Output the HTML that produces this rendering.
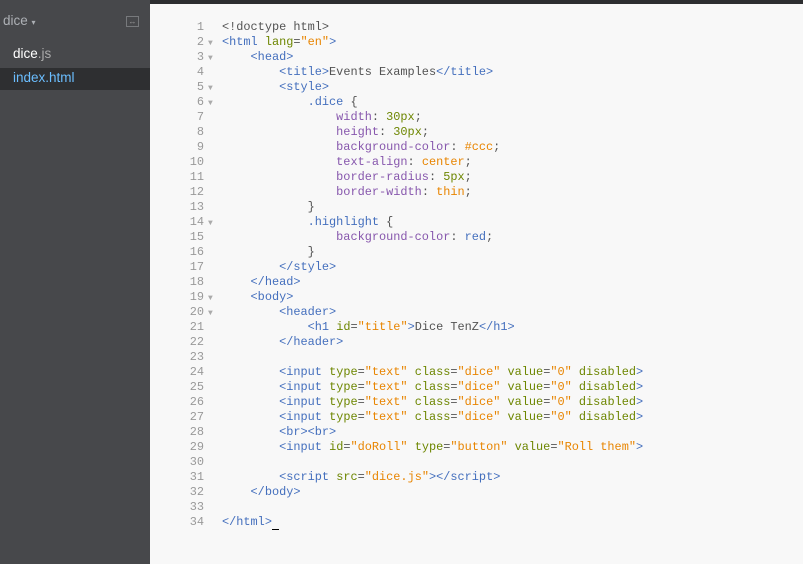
<!DOCTYPE html>
<html><head><style>
body{margin:0;width:803px;height:564px;overflow:hidden;background:#f8f8f8;position:relative;font-family:"Liberation Sans",sans-serif}
#side{position:absolute;left:0;top:0;width:150px;height:564px;background:#47484b}
#top{position:absolute;left:150px;top:0;width:653px;height:4px;background:#2d2e30}
.t{position:absolute;font-size:13.5px}
#code{position:absolute;left:0;top:20px;width:803px;font-family:"Liberation Mono",monospace;font-size:11.9px;line-height:15px;color:#535353}
.l{height:15px;position:relative}
.n{position:absolute;left:150px;width:54px;text-align:right;color:#999}
.f{position:absolute;left:208px;color:#aaa;font-size:8px;top:1px}
.c{position:absolute;left:222px;white-space:pre}
.g{color:#446fbd}.a{color:#6d8600}.s{color:#e88501}.p{color:#8757ad}
</style></head><body>
<div id="side">
<div class="t" style="left:3px;top:13px;color:#adb0b5">dice <span style="font-size:8px">▾</span></div>
<div style="position:absolute;left:126px;top:16px;width:11px;height:9px;border:1px solid #77797c;color:#999;font-size:8px;line-height:9px;text-align:center">↔</div>
<div class="t" style="left:13px;top:46px;color:#fff">dice<span style="color:#aaa">.js</span></div>
<div style="position:absolute;left:0;top:68px;width:150px;height:22px;background:#2e2f31"></div>
<div class="t" style="left:13px;top:70px;color:#6bbeff">index.html</div>
</div>
<div id="top"></div>
<div id="code">
<div class="l"><span class="n">1</span><span class="c">&lt;!doctype html&gt;</span></div>
<div class="l"><span class="n">2</span><span class="f">▼</span><span class="c"><span class="g">&lt;html</span> <span class="a">lang</span>=<span class="s">"en"</span><span class="g">&gt;</span></span></div>
<div class="l"><span class="n">3</span><span class="f">▼</span><span class="c">    <span class="g">&lt;head&gt;</span></span></div>
<div class="l"><span class="n">4</span><span class="c">        <span class="g">&lt;title&gt;</span>Events Examples<span class="g">&lt;/title&gt;</span></span></div>
<div class="l"><span class="n">5</span><span class="f">▼</span><span class="c">        <span class="g">&lt;style&gt;</span></span></div>
<div class="l"><span class="n">6</span><span class="f">▼</span><span class="c">            <span class="g">.dice</span> {</span></div>
<div class="l"><span class="n">7</span><span class="c">                <span class="p">width</span>: <span class="a">30px</span>;</span></div>
<div class="l"><span class="n">8</span><span class="c">                <span class="p">height</span>: <span class="a">30px</span>;</span></div>
<div class="l"><span class="n">9</span><span class="c">                <span class="p">background-color</span>: <span class="s">#ccc</span>;</span></div>
<div class="l"><span class="n">10</span><span class="c">                <span class="p">text-align</span>: <span class="s">center</span>;</span></div>
<div class="l"><span class="n">11</span><span class="c">                <span class="p">border-radius</span>: <span class="a">5px</span>;</span></div>
<div class="l"><span class="n">12</span><span class="c">                <span class="p">border-width</span>: <span class="s">thin</span>;</span></div>
<div class="l"><span class="n">13</span><span class="c">            }</span></div>
<div class="l"><span class="n">14</span><span class="f">▼</span><span class="c">            <span class="g">.highlight</span> {</span></div>
<div class="l"><span class="n">15</span><span class="c">                <span class="p">background-color</span>: <span class="g">red</span>;</span></div>
<div class="l"><span class="n">16</span><span class="c">            }</span></div>
<div class="l"><span class="n">17</span><span class="c">        <span class="g">&lt;/style&gt;</span></span></div>
<div class="l"><span class="n">18</span><span class="c">    <span class="g">&lt;/head&gt;</span></span></div>
<div class="l"><span class="n">19</span><span class="f">▼</span><span class="c">    <span class="g">&lt;body&gt;</span></span></div>
<div class="l"><span class="n">20</span><span class="f">▼</span><span class="c">        <span class="g">&lt;header&gt;</span></span></div>
<div class="l"><span class="n">21</span><span class="c">            <span class="g">&lt;h1</span> <span class="a">id</span>=<span class="s">"title"</span><span class="g">&gt;</span>Dice TenZ<span class="g">&lt;/h1&gt;</span></span></div>
<div class="l"><span class="n">22</span><span class="c">        <span class="g">&lt;/header&gt;</span></span></div>
<div class="l"><span class="n">23</span></div>
<div class="l"><span class="n">24</span><span class="c">        <span class="g">&lt;input</span> <span class="a">type</span>=<span class="s">"text"</span> <span class="a">class</span>=<span class="s">"dice"</span> <span class="a">value</span>=<span class="s">"0"</span> <span class="a">disabled</span><span class="g">&gt;</span></span></div>
<div class="l"><span class="n">25</span><span class="c">        <span class="g">&lt;input</span> <span class="a">type</span>=<span class="s">"text"</span> <span class="a">class</span>=<span class="s">"dice"</span> <span class="a">value</span>=<span class="s">"0"</span> <span class="a">disabled</span><span class="g">&gt;</span></span></div>
<div class="l"><span class="n">26</span><span class="c">        <span class="g">&lt;input</span> <span class="a">type</span>=<span class="s">"text"</span> <span class="a">class</span>=<span class="s">"dice"</span> <span class="a">value</span>=<span class="s">"0"</span> <span class="a">disabled</span><span class="g">&gt;</span></span></div>
<div class="l"><span class="n">27</span><span class="c">        <span class="g">&lt;input</span> <span class="a">type</span>=<span class="s">"text"</span> <span class="a">class</span>=<span class="s">"dice"</span> <span class="a">value</span>=<span class="s">"0"</span> <span class="a">disabled</span><span class="g">&gt;</span></span></div>
<div class="l"><span class="n">28</span><span class="c">        <span class="g">&lt;br&gt;&lt;br&gt;</span></span></div>
<div class="l"><span class="n">29</span><span class="c">        <span class="g">&lt;input</span> <span class="a">id</span>=<span class="s">"doRoll"</span> <span class="a">type</span>=<span class="s">"button"</span> <span class="a">value</span>=<span class="s">"Roll them"</span><span class="g">&gt;</span></span></div>
<div class="l"><span class="n">30</span></div>
<div class="l"><span class="n">31</span><span class="c">        <span class="g">&lt;script</span> <span class="a">src</span>=<span class="s">"dice.js"</span><span class="g">&gt;&lt;/script&gt;</span></span></div>
<div class="l"><span class="n">32</span><span class="c">    <span class="g">&lt;/body&gt;</span></span></div>
<div class="l"><span class="n">33</span></div>
<div class="l"><span class="n">34</span><span class="c"><span class="g">&lt;/html&gt;</span><span style="border-bottom:1px solid #000">&nbsp;</span></span></div>
</div>
</body></html>
